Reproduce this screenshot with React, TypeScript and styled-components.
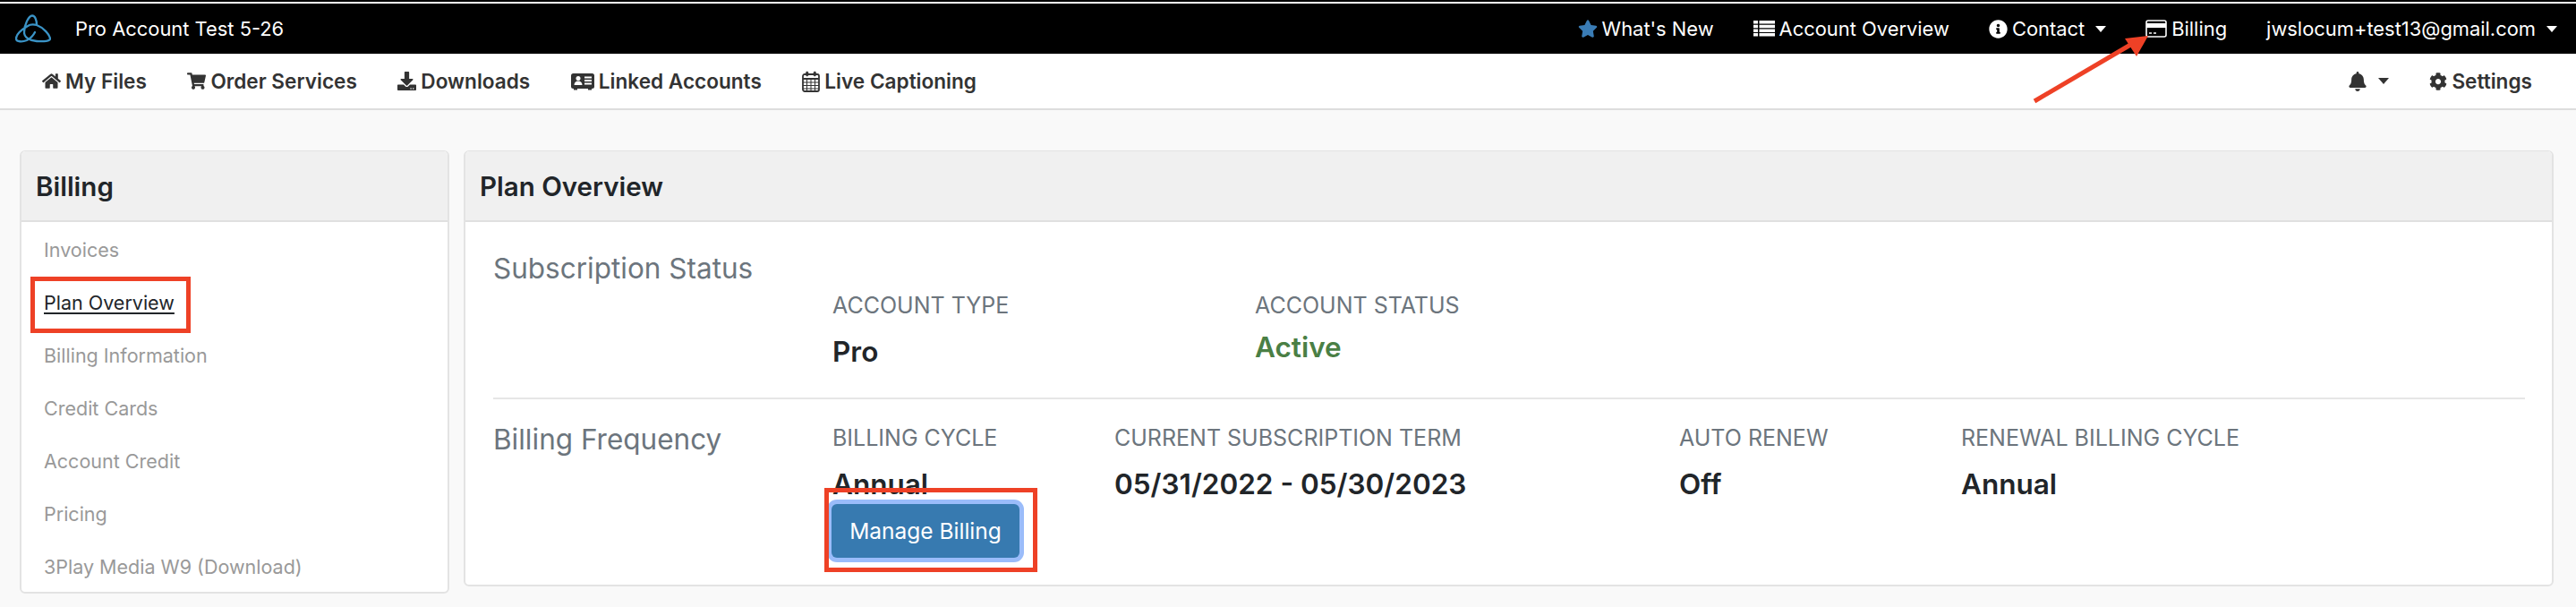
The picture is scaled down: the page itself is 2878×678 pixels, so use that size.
import React from "react";
import styled, { createGlobalStyle } from "styled-components";
import { FaHome, FaShoppingCart, FaDownload, FaStar, FaInfoCircle, FaBell, FaCog } from "react-icons/fa";

const Global = createGlobalStyle`
  html, body { margin: 0; padding: 0; background: #f9f9f9; }
  body { font-family: Inter, "Liberation Sans", sans-serif; color: #212529; -webkit-font-smoothing: antialiased; }
  * { box-sizing: border-box; }
`;

const Page = styled.div`
  position: relative;
  width: 2878px;
  height: 678px;
  overflow: hidden;
  background: #f9f9f9;
`;

const Frame = styled.header`
  background: #fff;
  border-top: 2px solid #000;
  padding-top: 2px;
`;

const TopBar = styled.div`
  height: 56px;
  background: #000;
  color: #fff;
  display: flex;
  align-items: center;
  justify-content: space-between;
  padding: 0 21px 0 17px;
  font-size: 21.9px;
`;

const Brand = styled.div`
  display: flex;
  align-items: center;
  gap: 27px;
`;

const TopLinks = styled.nav`
  display: flex;
  align-items: center;
  gap: 44px;
`;

const TopLink = styled.a`
  display: flex;
  align-items: center;
  gap: 5px;
  white-space: nowrap;
  color: #fff;
  svg { flex: none; }
`;

const Caret = styled.span<{ $dark?: boolean }>`
  width: 0;
  height: 0;
  margin-left: 7px;
  border-left: 6px solid transparent;
  border-right: 6px solid transparent;
  border-top: 7px solid ${(p) => (p.$dark ? "#333" : "#fff")};
`;

const SubNav = styled.nav`
  height: 63px;
  background: #fff;
  border-bottom: 2px solid #ddd;
  display: flex;
  align-items: center;
  justify-content: space-between;
  padding: 0 49px 0 47px;
  font-size: 22.6px;
  font-weight: 600;
  color: #333;
`;

const SubGroup = styled.div`
  display: flex;
  align-items: center;
  gap: 45.5px;
`;

const SubLink = styled.a`
  display: flex;
  align-items: center;
  gap: 5px;
  white-space: nowrap;
`;

const Content = styled.main`
  display: flex;
  align-items: flex-start;
  gap: 16px;
  padding: 45px 25px 0 22px;
`;

const Card = styled.section`
  background: #fff;
  border: 2px solid #e3e3e3;
  border-top-width: 1px;
  border-radius: 6px;
  overflow: hidden;
`;

const SideCard = styled(Card)`
  width: 480px;
  height: 495px;
  flex: none;
`;

const MainCard = styled(Card)`
  flex: 1;
  height: 487px;
`;

const CardHead = styled.h2`
  margin: 0;
  height: 79px;
  display: flex;
  align-items: center;
  padding-left: 16px;
  background: #f0f0f0;
  border-bottom: 2px solid #e0e0e0;
  font-size: 29.5px;
  font-weight: 600;
  color: #212529;
`;

const SideList = styled.ul`
  list-style: none;
  margin: 0;
  padding: 1px 0 0 25px;
`;

const SideItem = styled.li<{ $active?: boolean }>`
  height: 59px;
  display: flex;
  align-items: center;
  font-size: 21.5px;
  color: ${(p) => (p.$active ? "#212529" : "#999")};
  text-decoration: ${(p) => (p.$active ? "underline" : "none")};
  text-underline-offset: 3px;
`;

const MainBody = styled.div`
  padding: 0 30px 0 31px;
`;

const Block = styled.div<{ $height: number }>`
  height: ${(p) => p.$height}px;
  display: grid;
  grid-template-columns: 379px 1fr;
  & + & { border-top: 2px solid #e6e6e6; }
`;

const BlockTitle = styled.h3<{ $top: number }>`
  margin: 0;
  padding-top: ${(p) => p.$top}px;
  font-size: 31.5px;
  font-weight: 400;
  line-height: 34px;
  color: #6c757d;
`;

const Fields = styled.div<{ $top: number }>`
  display: flex;
  align-items: flex-start;
  padding-top: ${(p) => p.$top}px;
`;

const Field = styled.div<{ $width: number }>`
  width: ${(p) => p.$width}px;
  flex: none;
`;

const Label = styled.div`
  font-size: 25px;
  line-height: 30px;
  color: #6c757d;
  white-space: nowrap;
`;

const Value = styled.div<{ $green?: boolean; $lift?: number }>`
  margin-top: ${(p) => 18 - (p.$lift ?? 0)}px;
  font-size: 31.5px;
  line-height: 38px;
  font-weight: 600;
  white-space: nowrap;
  color: ${(p) => (p.$green ? "#4a7f45" : "#212529")};
`;

const ManageButton = styled.button`
  display: block;
  width: 210px;
  height: 60px;
  margin: 3px 0 0 -1px;
  background: #377ab0;
  color: #fff;
  border: 0;
  border-radius: 6px;
  box-shadow: 0 0 0 5px #9abcfa;
  font: 400 24.5px Inter, "Liberation Sans", sans-serif;
  position: relative;
`;

const RedBox = styled.div<{ $x: number; $y: number; $w: number; $h: number }>`
  position: absolute;
  left: ${(p) => p.$x}px;
  top: ${(p) => p.$y}px;
  width: ${(p) => p.$w}px;
  height: ${(p) => p.$h}px;
  border: 5px solid #ee4126;
  pointer-events: none;
`;

const ArrowLayer = styled.svg`
  position: absolute;
  left: 2260px;
  top: 30px;
`;

const Logo = () => (
  <svg width="40" height="32" viewBox="0 0 40 32" fill="none" stroke="#3a93c6" strokeWidth="2.3" strokeLinecap="round">
    <path d="M24 12 C24 6 22 1.500 19 1.500 C15 1.500 10 12 10 20 C10 26 16 29.500 24 30 C32 30.500 39.500 30 39 27 C38.500 23 32 15 24 12 C20 11 17 11 14 13 C9 16 1 22 1 27 C1 31 8 31 13 29 C17 27 20 24 22 20" />
  </svg>
);

const ListIcon = () => (
  <svg width="24" height="18" viewBox="0 0 24 18" fill="#fff">
    <path d="M0 0h5v3.500H0zM6.500 0H24v3.500H6.500zM0 4.700h5v3.500H0zM6.500 4.700H24v3.500H6.500zM0 9.400h5v3.500H0zM6.500 9.400H24v3.500H6.500zM0 14.100h5v3.500H0zM6.500 14.100H24v3.500H6.500z" />
  </svg>
);

const CardIcon = () => (
  <svg width="24" height="20" viewBox="0 0 24 20" fill="none">
    <rect x="1" y="1" width="22" height="18" rx="2" stroke="#fff" strokeWidth="1.6" />
    <rect x="1" y="4" width="22" height="5" fill="#fff" />
    <path d="M4 15h3M9 15h3" stroke="#fff" strokeWidth="1.6" />
  </svg>
);

const LinkedIcon = () => (
  <svg width="26" height="20" viewBox="0 0 26 20">
    <rect x="0" y="1" width="26" height="17" rx="2.500" fill="#333" />
    <path d="M3 18h4v1.500H3zM19 18h4v1.500h-4z" fill="#333" />
    <circle cx="8" cy="6.500" r="2.500" fill="#fff" />
    <path d="M3.500 14c0-3 2-4.500 4.500-4.500s4.500 1.500 4.500 4.500z" fill="#fff" />
    <path d="M15 5.500h8M15 9h8M15 12.500h8" stroke="#fff" strokeWidth="1.800" />
  </svg>
);

const CalendarIcon = () => (
  <svg width="20" height="24" viewBox="0 0 20 24" fill="none" stroke="#333">
    <rect x="1" y="4" width="18" height="19" rx="2" strokeWidth="1.800" />
    <path d="M1 9h18" strokeWidth="2" />
    <path d="M1 13h18M1 16.500h18M1 20h18M5.500 9v14M10 9v14M14.500 9v14" strokeWidth="1" />
    <rect x="4.500" y="1" width="2.500" height="5" rx="1.250" fill="#333" strokeWidth="0.600" />
    <rect x="13" y="1" width="2.500" height="5" rx="1.250" fill="#333" strokeWidth="0.600" />
  </svg>
);

const sideItems = ["Invoices", "Plan Overview", "Billing Information", "Credit Cards", "Account Credit", "Pricing", "3Play Media W9 (Download)"];

export default function App() {
  return (
    <Page>
      <Global />
      <Frame>
        <TopBar>
          <Brand>
            <Logo />
            <span>Pro Account Test 5-26</span>
          </Brand>
          <TopLinks>
            <TopLink><FaStar size={22} color="#3a7cb5" />What's New</TopLink>
            <TopLink><ListIcon />Account Overview</TopLink>
            <TopLink><FaInfoCircle size={21} />Contact<Caret /></TopLink>
            <TopLink><CardIcon />Billing</TopLink>
            <TopLink>jwslocum+test13@gmail.com<Caret /></TopLink>
          </TopLinks>
        </TopBar>
      </Frame>
      <SubNav>
        <SubGroup>
          <SubLink><FaHome size={21} />My Files</SubLink>
          <SubLink><FaShoppingCart size={21} />Order Services</SubLink>
          <SubLink><FaDownload size={21} />Downloads</SubLink>
          <SubLink><LinkedIcon />Linked Accounts</SubLink>
          <SubLink><CalendarIcon />Live Captioning</SubLink>
        </SubGroup>
        <SubGroup>
          <SubLink><FaBell size={22} /><Caret $dark /></SubLink>
          <SubLink><FaCog size={20} />Settings</SubLink>
        </SubGroup>
      </SubNav>
      <Content>
        <SideCard>
          <CardHead>Billing</CardHead>
          <SideList>
            {sideItems.map((item) => (
              <SideItem key={item} $active={item === "Plan Overview"}>{item}</SideItem>
            ))}
          </SideList>
        </SideCard>
        <MainCard>
          <CardHead>Plan Overview</CardHead>
          <MainBody>
            <Block $height={196}>
              <BlockTitle $top={35}>Subscription Status</BlockTitle>
              <Fields $top={78}>
                <Field $width={472}>
                  <Label>ACCOUNT TYPE</Label>
                  <Value>Pro</Value>
                </Field>
                <Field $width={400}>
                  <Label>ACCOUNT STATUS</Label>
                  <Value $green $lift={5}>Active</Value>
                </Field>
              </Fields>
            </Block>
            <Block $height={200}>
              <BlockTitle $top={28}>Billing Frequency</BlockTitle>
              <Fields $top={28}>
                <Field $width={315}>
                  <Label>BILLING CYCLE</Label>
                  <Value>Annual</Value>
                  <ManageButton>Manage Billing</ManageButton>
                </Field>
                <Field $width={631}>
                  <Label>CURRENT SUBSCRIPTION TERM</Label>
                  <Value>05/31/2022 - 05/30/2023</Value>
                </Field>
                <Field $width={315}>
                  <Label>AUTO RENEW</Label>
                  <Value>Off</Value>
                </Field>
                <Field $width={400}>
                  <Label>RENEWAL BILLING CYCLE</Label>
                  <Value>Annual</Value>
                </Field>
              </Fields>
            </Block>
          </MainBody>
        </MainCard>
      </Content>
      <RedBox $x={34} $y={309} $w={179} $h={63} />
      <RedBox $x={921} $y={545} $w={238} $h={94} />
      <ArrowLayer width="150" height="90" viewBox="0 0 150 90">
        <path d="M13 83 L122 19" stroke="#ee4126" strokeWidth="5" />
        <path d="M140 10 L114 13 L127 33 Z" fill="#ee4126" />
      </ArrowLayer>
    </Page>
  );
}
